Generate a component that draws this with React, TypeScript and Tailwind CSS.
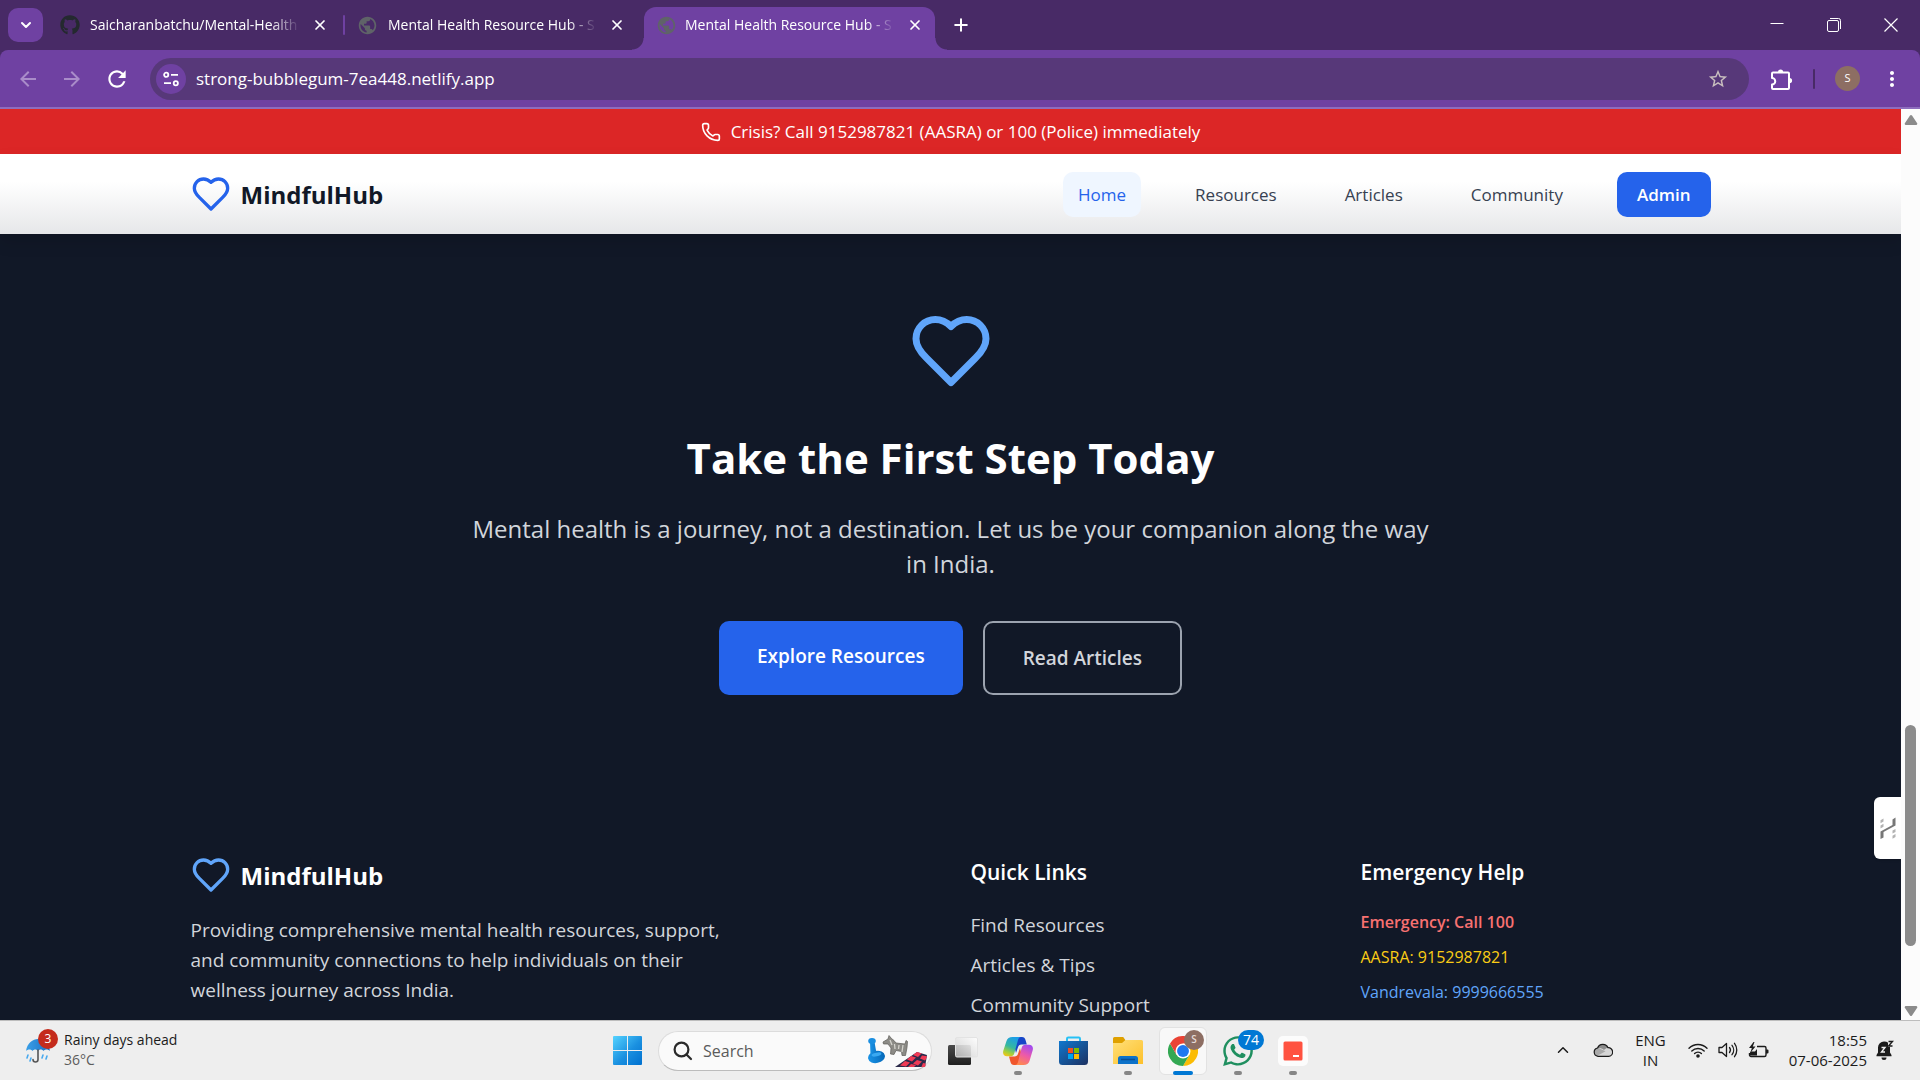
import type { ReactNode } from "react";
import { ChevronDown, ChevronUp, Phone, Plus, X } from "lucide-react";
import { FaGithub, FaWhatsapp } from "react-icons/fa6";
import { MdArrowBack, MdArrowForward, MdMoreVert, MdPublic, MdRefresh, MdStarBorder } from "react-icons/md";

function Heart({ className }: { className: string }) {
  return (
    <svg
      viewBox="0 0 24 24"
      fill="none"
      stroke="currentColor"
      strokeWidth="2"
      strokeLinecap="round"
      strokeLinejoin="round"
      className={className}
      aria-hidden="true"
    >
      <path d="M19 14c1.49-1.46 3-3.21 3-5.5A5.5 5.5 0 0 0 16.5 3c-1.76 0-3 .5-4.5 2-1.5-1.5-2.74-2-4.5-2A5.5 5.5 0 0 0 2 8.5c0 2.3 1.5 4.05 3 5.5l7 7Z" />
    </svg>
  );
}

/* ---------- Browser chrome ---------- */

function TabTitle({ children }: { children: ReactNode }) {
  return (
    <span className="min-w-0 flex-1 overflow-hidden text-sm whitespace-nowrap text-white [mask-image:linear-gradient(to_right,black_86%,transparent)]">
      {children}
    </span>
  );
}

function CloseTab() {
  return (
    <button type="button" aria-label="Close tab" className="ml-3 text-white">
      <X className="size-4" strokeWidth={2.6} />
    </button>
  );
}

function TabStrip() {
  return (
    <div className="flex h-[50px] items-center pr-px pl-2">
      <button
        type="button"
        aria-label="Search tabs"
        className="mr-2 flex h-[34px] w-[35px] items-center justify-center rounded-[10px] bg-[#6f41a2] text-white"
      >
        <ChevronDown className="size-4" strokeWidth={3} />
      </button>
      <div className="flex w-[292px] items-center pr-[15px] pl-[9px]">
        <FaGithub className="mr-2.5 size-5 text-[#24292f]" />
        <TabTitle>Saicharanbatchu/Mental-Health</TabTitle>
        <CloseTab />
      </div>
      <span className="h-5 w-0.5 rounded bg-[#6f41a2]" />
      <div className="flex w-[299px] items-center pr-[19px] pl-3">
        <MdPublic className="mr-2.5 size-[21px] text-[#5f6368]" />
        <TabTitle>Mental Health Resource Hub - S</TabTitle>
        <CloseTab />
      </div>
      <div className="relative flex h-[43px] w-[291px] items-center self-end rounded-t-xl bg-[#6f41a2] px-3 pb-[7px] before:absolute before:bottom-0 before:-left-3 before:size-3 before:bg-[radial-gradient(circle_at_0_0,transparent_11px,#6f41a2_12px)] after:absolute after:-right-3 after:bottom-0 after:size-3 after:bg-[radial-gradient(circle_at_100%_0,transparent_11px,#6f41a2_12px)]">
        <MdPublic className="mr-2 size-[21px] text-[#5f6368]" />
        <TabTitle>Mental Health Resource Hub - S</TabTitle>
        <CloseTab />
      </div>
      <button type="button" aria-label="New tab" className="ml-4 text-white">
        <Plus className="size-5" strokeWidth={2.4} />
      </button>
      <div className="ml-auto flex h-full">
        <button type="button" aria-label="Minimise" className="flex w-[57px] items-center justify-center">
          <svg viewBox="0 0 14 14" className="size-3.5" stroke="#fff" fill="none">
            <path d="M0.5 5.5h13" />
          </svg>
        </button>
        <button type="button" aria-label="Restore" className="flex w-[57px] items-center justify-center">
          <svg viewBox="0 0 14 14" className="size-3.5" stroke="#fff" fill="none">
            <rect x="0.5" y="2.5" width="11" height="11" rx="1.5" />
            <path d="M3 0.5h8.5a2 2 0 0 1 2 2V11" />
          </svg>
        </button>
        <button type="button" aria-label="Close" className="flex w-[57px] items-center justify-center">
          <svg viewBox="0 0 14 14" className="size-3.5" stroke="#fff" strokeWidth="1.2" fill="none">
            <path d="M0.5 0.5l13 13M13.5 0.5l-13 13" />
          </svg>
        </button>
      </div>
    </div>
  );
}

function Toolbar() {
  return (
    <div className="flex h-[59px] items-center gap-5 rounded-t-lg border-b-2 border-[#8e6dbd] bg-[#6f41a2] pr-4 pl-4 text-white">
      <button type="button" aria-label="Back" className="text-[#a98cc9]">
        <MdArrowBack className="size-6" />
      </button>
      <button type="button" aria-label="Forward" className="text-[#a98cc9]">
        <MdArrowForward className="size-6" />
      </button>
      <button type="button" aria-label="Reload">
        <MdRefresh className="size-[26px]" />
      </button>
      <div className="flex h-[42px] flex-1 items-center rounded-full bg-[#573879] pr-5 pl-1.5">
        <button
          type="button"
          aria-label="View site information"
          className="flex size-[30px] items-center justify-center rounded-full bg-[#6f41a2]"
        >
          <svg viewBox="0 0 16 16" className="size-4" fill="none" stroke="#fff" strokeWidth="1.8">
            <circle cx="3.2" cy="3.8" r="2.1" />
            <path d="M8 3.8h7M1 12.2h7" />
            <circle cx="12.8" cy="12.2" r="2.1" />
          </svg>
        </button>
        <input
          type="text"
          aria-label="Address and search bar"
          defaultValue="strong-bubblegum-7ea448.netlify.app"
          className="ml-2.5 min-w-0 flex-1 bg-transparent text-[17px] text-white outline-none"
        />
        <button type="button" aria-label="Bookmark this tab" className="text-[#c9bfbf]">
          <MdStarBorder className="size-[22px]" />
        </button>
      </div>
      <button type="button" aria-label="Extensions">
        <svg viewBox="0 0 24 24" className="size-6" fill="none" stroke="#fff" strokeWidth="2" strokeLinejoin="round">
          <path d="M4 5.500h15a1 1 0 0 1 1 1V21a1 1 0 0 1-1 1H4a1 1 0 0 1-1-1v-3.500a3.200 3.200 0 0 0 0-6.500V6.500a1 1 0 0 1 1-1z" />
          <path d="M9 5a2.600 2.600 0 0 1 5.200 0zM20.500 11a2.600 2.600 0 0 1 0 5.200z" fill="#fff" stroke="none" />
        </svg>
      </button>
      <span className="h-5 w-0.5 rounded bg-[#482a66]" />
      <button
        type="button"
        aria-label="Profile"
        className="flex size-[25px] items-center justify-center rounded-full bg-[#8d6e63] text-[11px] text-white"
      >
        S
      </button>
      <button type="button" aria-label="Menu">
        <MdMoreVert className="size-6" />
      </button>
    </div>
  );
}

/* ---------- Web page ---------- */

const navItems = ["Resources", "Articles", "Community"];

function Nav() {
  return (
    <header className="relative bg-linear-to-b from-white from-35% to-[#e6e7e9] shadow-[0_8px_16px_rgba(0,0,0,0.12)]">
      <div className="mx-auto flex h-20 max-w-[1600px] items-center justify-between px-10">
        <a href="#home" className="flex items-end gap-2.5">
          <Heart className="size-10 text-[#2563eb]" />
          <span className="text-2xl leading-[38px] font-bold text-[#111827]">MindfulHub</span>
        </a>
        <nav className="flex items-center gap-10 text-[17px] leading-[25px] font-medium text-[#374151]">
          <a href="#home" className="rounded-[10px] bg-[#eff6ff] px-[15px] py-2.5 text-[#2563eb]">
            Home
          </a>
          {navItems.map((item) => (
            <a key={item} href={`#${item.toLowerCase()}`} className="px-3.5 py-2.5">
              {item}
            </a>
          ))}
          <a href="#admin" className="rounded-[10px] bg-[#2563eb] px-5 py-2.5 font-semibold text-white">
            Admin
          </a>
        </nav>
      </div>
    </header>
  );
}

function Hero() {
  return (
    <section className="flex flex-col items-center px-10 pt-[75px] pb-[100px] text-center">
      <Heart className="size-[84px] text-[#60a5fa]" />
      <h1 className="mt-10 text-[42px] leading-[50px] font-bold text-white">Take the First Step Today</h1>
      <p className="mt-7 max-w-[960px] text-2xl leading-[35px] text-[#d1d5db]">
        Mental health is a journey, not a destination. Let us be your companion along the way in India.
      </p>
      <div className="mt-10 flex gap-5 text-[19px] leading-[30px] font-semibold">
        <a href="#resources" className="rounded-[10px] bg-[#2563eb] px-[38px] py-5 text-white">
          Explore Resources
        </a>
        <a href="#articles" className="rounded-[10px] border-2 border-[#9ca3af] px-[38px] py-5 text-[#d1d5db]">
          Read Articles
        </a>
      </div>
    </section>
  );
}

function Footer() {
  return (
    <footer className="mx-auto grid max-w-[1600px] grid-cols-4 gap-10 px-10 pt-[60px]">
      <div className="col-span-2">
        <div className="flex items-end gap-2.5">
          <Heart className="size-10 text-[#60a5fa]" />
          <span className="text-2xl leading-[38px] font-bold text-white">MindfulHub</span>
        </div>
        <p className="mt-5 max-w-[560px] text-[19px] leading-[30px] text-[#d1d5db]">
          Providing comprehensive mental health resources, support, and community connections to help individuals on
          their wellness journey across India.
        </p>
      </div>
      <div>
        <h2 className="text-[21px] leading-[35px] font-semibold text-white">Quick Links</h2>
        <ul className="mt-5 space-y-2.5 text-[19px] leading-[30px] text-[#d1d5db]">
          <li>
            <a href="#resources">Find Resources</a>
          </li>
          <li>
            <a href="#articles">Articles &amp; Tips</a>
          </li>
          <li>
            <a href="#community">Community Support</a>
          </li>
        </ul>
      </div>
      <div>
        <h2 className="text-[21px] leading-[35px] font-semibold text-white">Emergency Help</h2>
        <ul className="mt-5 space-y-2.5 text-base leading-[25px]">
          <li className="font-semibold text-[#f87171]">Emergency: Call 100</li>
          <li className="text-[#facc15]">AASRA: 9152987821</li>
          <li className="text-[#60a5fa]">Vandrevala: 9999666555</li>
        </ul>
      </div>
    </footer>
  );
}

function ExtensionHandle() {
  return (
    <button
      type="button"
      aria-label="Open extension panel"
      className="absolute right-0 bottom-[161px] flex h-[62px] w-[27px] items-center justify-center rounded-l-md bg-white shadow"
    >
      <svg viewBox="0 0 16 22" className="h-[22px] w-4">
        <path d="M0.5 22v-7.500L12.500 8V2.500L15.500 0.500v8L3.500 15v5.500z" fill="#777" />
        <path
          d="M0.500 3.200l3-1.700v3l-3 1.700zM0.500 8.400l3-1.700v3l-3 1.700zM12.500 13.600l3-1.700v3l-3 1.700zM12.500 18.800l3-1.700v3l-3 1.700z"
          fill="#b3b3b3"
        />
      </svg>
    </button>
  );
}

function Scrollbar() {
  return (
    <div className="flex w-[19px] shrink-0 flex-col items-center bg-[#fcfcfc] pt-1.5 pb-1">
      <svg viewBox="0 0 14 10" className="h-2.5 w-3.5" fill="#8b8b8b">
        <path d="M6 0.600a1.300 1.300 0 0 1 2 0l5 7.400a1.200 1.200 0 0 1-1 2H2a1.200 1.200 0 0 1-1-2z" />
      </svg>
      <div className="grow-[600]" />
      <div className="w-[11px] grow-[221] rounded-full bg-[#8b8b8b]" />
      <div className="grow-[60]" />
      <svg viewBox="0 0 14 10" className="h-2.5 w-3.5 rotate-180" fill="#8b8b8b">
        <path d="M6 0.600a1.300 1.300 0 0 1 2 0l5 7.400a1.200 1.200 0 0 1-1 2H2a1.200 1.200 0 0 1-1-2z" />
      </svg>
    </div>
  );
}

/* ---------- Taskbar ---------- */

function UmbrellaIcon() {
  return (
    <svg viewBox="0 0 28 30" className="h-[30px] w-7">
      <defs>
        <linearGradient id="umb" x1="0" y1="0" x2="1" y2="0">
          <stop offset="0" stopColor="#3aa0e8" />
          <stop offset="1" stopColor="#1b6ec2" />
        </linearGradient>
      </defs>
      <path d="M2 16C3 8 9 4 14 4s11 4 12 12c-2-2-5-2-6.500 0-1.500-2-4-2-5.500 0-1.500-2-4-2-5.500 0C7 14 4 14 2 16z" fill="url(#umb)" />
      <path d="M14 15v9.500a2.500 2.500 0 0 1-5 0" stroke="#555" strokeWidth="1.6" fill="none" strokeLinecap="round" />
      <path d="M4 20l-1 3M7 23l-1 3M19 20l-1 3M23 21l-1 3" stroke="#49a9ee" strokeWidth="1.6" strokeLinecap="round" />
    </svg>
  );
}

function WindowsIcon() {
  return (
    <svg viewBox="0 0 29 29" className="size-[29px]">
      <defs>
        <linearGradient id="win" x1="0" y1="0" x2="1" y2="1">
          <stop offset="0" stopColor="#55d3ff" />
          <stop offset="0.55" stopColor="#1a90e0" />
          <stop offset="1" stopColor="#0070cf" />
        </linearGradient>
      </defs>
      <path d="M1 0h13v14H0V1a1 1 0 0 1 1-1zM15 0h13a1 1 0 0 1 1 1v13H15zM0 15h14v14H1a1 1 0 0 1-1-1zM15 15h14v13a1 1 0 0 1-1 1H15z" fill="url(#win)" />
    </svg>
  );
}

function GamesIcon() {
  return (
    <svg viewBox="0 0 60 34" className="h-[34px] w-[60px]">
      <defs>
        <linearGradient id="pawn" x1="0" y1="0" x2="1" y2="0">
          <stop offset="0" stopColor="#1a93e6" />
          <stop offset="1" stopColor="#0568b8" />
        </linearGradient>
        <clipPath id="board">
          <path d="M27 33L49 18l10 3-2 12z" />
        </clipPath>
      </defs>
      <ellipse cx="8.500" cy="23" rx="8.500" ry="6" transform="rotate(-12 8.5 23)" fill="url(#pawn)" />
      <path d="M2 8h4.500l1.500 8.500 4.500 3.500-10 1.500z" fill="url(#pawn)" />
      <ellipse cx="4" cy="7" rx="3.800" ry="3" fill="#1a8ee0" />
      <ellipse cx="8.500" cy="20.500" rx="5" ry="1.800" transform="rotate(-12 8.5 20.5)" fill="#3aa9f2" />
      <path d="M15 8l5-3 1-3.500 2.500 3L26 6.500l2 2.500 9 1 1-3.500 1.500 1-.5 6-1.500 8h-3.500l-.5-4-5.500-1-2 4-3.500-.5.500-6-3-4-4.500 0z" fill="#8c8b86" stroke="#5d5c58" strokeWidth=".7" />
      <path d="M22 6l2 5M26.500 10l.5 5M31 11l-.5 4M35 11l-1 7" stroke="#d4d3cd" strokeWidth="1.300" />
      <g clipPath="url(#board)">
        <path d="M24 16h38v20H24z" fill="#2c2a4a" />
        <path d="M49 17l5 2-4 4-5-2zM43 22l5 1.500-4 4-5-2zM54 21.500l6 1-3 4-5-2zM49 26l5 1.500-4 4-5-2zM37 27l5 1.500-4 4-6-1zM43 30l5 1-4 4-5-1zM55 29l6 1-3 5-5-1z" fill="#f03a55" />
      </g>
    </svg>
  );
}

function TaskViewIcon() {
  return (
    <svg viewBox="0 0 30 30" className="size-[30px]">
      <defs>
        <linearGradient id="tvd" x1="0" y1="0" x2="0" y2="1">
          <stop offset="0" stopColor="#4b4b4b" />
          <stop offset="1" stopColor="#1f1f1f" />
        </linearGradient>
        <linearGradient id="tvl" x1="1" y1="0" x2="0" y2="1">
          <stop offset="0" stopColor="#ffffff" stopOpacity=".95" />
          <stop offset="1" stopColor="#cfcfcf" stopOpacity=".8" />
        </linearGradient>
      </defs>
      <rect x="0" y="9" width="23" height="20" rx="1.500" fill="url(#tvd)" />
      <rect x="7.500" y="1.500" width="22" height="19.500" rx="1.500" fill="url(#tvl)" stroke="#e3e3e3" />
    </svg>
  );
}

function CopilotIcon() {
  return (
    <svg viewBox="0 0 30 28" className="h-7 w-[30px]">
      <defs>
        <linearGradient id="cpa" x1="0.6" y1="0" x2="0.2" y2="1">
          <stop offset="0" stopColor="#1b9de8" />
          <stop offset="0.5" stopColor="#35b8a0" />
          <stop offset="0.8" stopColor="#a6cf3a" />
          <stop offset="1" stopColor="#f4c515" />
        </linearGradient>
        <linearGradient id="cpb" x1="0.7" y1="0" x2="0.3" y2="1">
          <stop offset="0" stopColor="#a24bef" />
          <stop offset="0.5" stopColor="#ee5aa8" />
          <stop offset="1" stopColor="#ff8a4c" />
        </linearGradient>
      </defs>
      <path d="M9 0h10c2 0 3 1 3.500 3l1.300 4.500h-5.300c-2 0-3 1-3.600 3L13 16z" fill="#1746c8" />
      <path d="M21 28H11c-2 0-3-1-3.500-3L6 19.500h5.500c2 0 3-1 3.600-3L17 11z" fill="#f0562c" />
      <path d="M9.500 0H18c-1.500 0-2.400 1.200-3 3l-3.600 13c-.7 2.300-1.600 3.300-3.900 3.300H4c-3 0-4.600-2.300-3.700-5.600L3.500 4C4.400 1.200 6.200 0 9.500 0z" fill="url(#cpa)" />
      <path d="M20.500 28H12c1.500 0 2.400-1.200 3-3l3.600-14c.7-2.300 1.600-3.300 3.900-3.300H26c3 0 4.600 2.300 3.700 5.600L26.500 24c-.9 2.800-2.700 4-6 4z" fill="url(#cpb)" />
    </svg>
  );
}

function StoreIcon() {
  return (
    <svg viewBox="0 0 29 30" className="h-[30px] w-[29px]">
      <defs>
        <linearGradient id="store" x1="0" y1="0" x2="1" y2="1">
          <stop offset="0" stopColor="#0f78cf" />
          <stop offset="1" stopColor="#1d3161" />
        </linearGradient>
      </defs>
      <path d="M8 7V2.800A1.300 1.300 0 0 1 9.300 1.500h10.400A1.300 1.300 0 0 1 21 2.800V7" fill="none" stroke="#28c1f5" strokeWidth="2" />
      <path d="M0 5h29v20.500A3.500 3.500 0 0 1 25.500 29h-22A3.500 3.500 0 0 1 0 25.500z" fill="url(#store)" />
      <path d="M9 12h5v5H9z" fill="#f25022" />
      <path d="M15 12h5v5h-5z" fill="#7fba00" />
      <path d="M9 18h5v5H9z" fill="#00a4ef" />
      <path d="M15 18h5v5h-5z" fill="#ffb900" />
    </svg>
  );
}

function ExplorerIcon() {
  return (
    <svg viewBox="0 0 30 27" className="h-[27px] w-[30px]">
      <defs>
        <linearGradient id="fold" x1="0" y1="0" x2="1" y2="1">
          <stop offset="0" stopColor="#ffe07a" />
          <stop offset="1" stopColor="#fdc02a" />
        </linearGradient>
      </defs>
      <path d="M1.500 0h8.700l2.500 3.500L9 8H0V1.500A1.500 1.500 0 0 1 1.500 0z" fill="#dfa000" />
      <path d="M0 6h9l3.500-3H28.500A1.500 1.500 0 0 1 30 4.500V27H0z" fill="url(#fold)" />
      <path d="M5 27v-5.500a2.500 2.500 0 0 1 2.500-2.500h15a2.500 2.500 0 0 1 2.500 2.500V27z" fill="#0d72c9" />
      <path d="M8 22.500h14" stroke="#0a4f94" strokeWidth="1.500" />
    </svg>
  );
}

function ChromeIcon() {
  return (
    <svg viewBox="0 0 48 48" className="size-[30px]">
      <path d="M24 12h20.800A24 24 0 0 1 24 48l10.400-18z" fill="#fbbc04" />
      <path d="M13.600 30L3.200 12A24 24 0 0 0 24 48l10.400-18z" fill="#34a853" />
      <path d="M3.200 12A24 24 0 0 1 44.800 12H24L13.600 30z" fill="#ea4335" />
      <circle cx="24" cy="24" r="12" fill="#fff" />
      <circle cx="24" cy="24" r="9.500" fill="#1f78f0" />
    </svg>
  );
}

function RecorderIcon() {
  return (
    <svg viewBox="0 0 30 30" className="size-[30px]">
      <rect width="30" height="30" rx="5" fill="#fcfcfc" />
      <rect x="5.500" y="5.500" width="19" height="19" rx="1.500" fill="#ff5240" />
      <rect x="15" y="19" width="6" height="2" fill="#fff" />
    </svg>
  );
}

type Running = "none" | "open" | "active";

function Tile({ label, running = "none", children }: { label: string; running?: Running; children: ReactNode }) {
  return (
    <button
      type="button"
      aria-label={label}
      className={
        running === "active"
          ? "relative flex size-12 items-center justify-center rounded-md border border-[#e2e2e2] bg-[#f8f8f8]"
          : "relative flex size-12 items-center justify-center rounded-md"
      }
    >
      {children}
      {running === "open" && <span className="absolute bottom-0 h-1 w-2 rounded-full bg-[#868686]" />}
      {running === "active" && <span className="absolute -bottom-px h-1 w-5 rounded-full bg-[#0078d4]" />}
    </button>
  );
}

function SystemTray() {
  return (
    <div className="flex items-center justify-end pr-[26px] pb-0.5 text-[#1b1b1b]">
      <button type="button" aria-label="Show hidden icons">
        <ChevronUp className="size-[18px]" />
      </button>
      <svg viewBox="0 0 20 14" className="ml-[21px] h-3.5 w-5">
        <path d="M5 13.300a4.200 4.200 0 0 1-.4-8.300A5.600 5.600 0 0 1 15 4.700a4.300 4.300 0 0 1 .6 8.600z" fill="#d6d6d6" />
        <path d="M4.600 5A5.600 5.600 0 0 1 15 4.700c-2 .3-3 1.300-4 2.300-2-2-4.400-2.300-6.400-2z" fill="#8c8c8c" />
        <path d="M1.200 10.500A4 4 0 0 1 7.500 6l5 2.300L4 13z" fill="#a9a9a9" />
        <path d="M5 13.300a4.200 4.200 0 0 1-.4-8.300A5.600 5.600 0 0 1 15 4.700a4.300 4.300 0 0 1 .6 8.600z" fill="none" stroke="#1b1b1b" strokeWidth="1.200" />
      </svg>
      <div className="ml-[22px] text-center text-[15px] leading-5">
        ENG
        <br />
        IN
      </div>
      <svg viewBox="0 0 20 16" className="ml-[22px] h-4 w-5" fill="none" stroke="#1b1b1b" strokeWidth="1.400" strokeLinecap="round">
        <path d="M1 6.200a12.700 12.700 0 0 1 18 0M3.800 9a8.800 8.800 0 0 1 12.400 0M6.600 11.600a4.900 4.900 0 0 1 6.800 0" />
        <circle cx="10" cy="14" r="1.100" fill="#1b1b1b" />
      </svg>
      <svg viewBox="0 0 20 18" className="ml-2.5 h-[18px] w-5" fill="none" stroke="#1b1b1b" strokeWidth="1.300" strokeLinecap="round" strokeLinejoin="round">
        <path d="M1 6.500h3L8.500 2.500v13L4 11.500H1z" />
        <path d="M11.500 6.500a4 4 0 0 1 0 5M14 4.300a7.500 7.500 0 0 1 0 9.400M16.500 2.300a11 11 0 0 1 0 13.400" />
      </svg>
      <svg viewBox="0 0 21 16" className="ml-2.5 h-4 w-[21px]">
        <path d="M9 4.500h7.500a1.500 1.500 0 0 1 1.500 1.500v7a1.500 1.500 0 0 1-1.500 1.500H3A1.500 1.500 0 0 1 1.500 13v-2" fill="none" stroke="#1b1b1b" strokeWidth="1.400" />
        <path d="M18 7.500h1.500q1 0 1 1v2q0 1-1 1H18zM2 9.500h5l2-2.500V13.500H2zM5.500 0L1 6h2.800L2.500 10.500 7.500 4.500H4.800L6.500 0z" fill="#1b1b1b" />
      </svg>
      <div className="ml-5 text-right text-[15px] leading-5">
        18:55
        <br />
        07-06-2025
      </div>
      <svg viewBox="0 0 18 20" className="ml-[9px] h-5 w-[18px]">
        <path d="M8 1.500a6 6 0 0 0-6 6v5L.5 15v1.200h15V15L14 12.500v-6A6 6 0 0 0 8 1.500zM5.500 17.500h5a2.500 2.500 0 0 1-5 0z" fill="#1b1b1b" />
        <path d="M5.500 7.500H9L5.500 12H9" fill="none" stroke="#eee" strokeWidth="1.400" />
        <path d="M12 0h6v7h-6z" fill="#eeeeee" />
        <path d="M12.500 1.500H16.500L12.500 6H16.500" fill="none" stroke="#1b1b1b" strokeWidth="1.400" />
      </svg>
    </div>
  );
}

function Taskbar() {
  return (
    <div className="grid h-[60px] shrink-0 grid-cols-[1fr_auto_1fr] items-center border-t border-[#bdbdbd] bg-[#eeeeee]">
      <button type="button" className="flex items-center gap-3 justify-self-start pb-0.5 pl-6 text-left">
        <span className="relative">
          <UmbrellaIcon />
          <span className="absolute -top-1.5 left-3.5 flex size-5 items-center justify-center rounded-full bg-[#c42b1c] text-xs text-white">
            3
          </span>
        </span>
        <span className="text-sm leading-5 text-[#1b1b1b]">
          Rainy days ahead
          <br />
          <span className="text-[#5c5c5c]">36°C</span>
        </span>
      </button>
      <div className="flex items-center gap-[7px]">
        <Tile label="Start">
          <WindowsIcon />
        </Tile>
        <label className="flex h-10 w-[274px] items-center rounded-full border border-b-[#bcbcbc] border-[#dcdcdc] bg-[#fafafa] pr-[3px] pl-3.5">
          <svg viewBox="0 0 20 20" className="size-5" fill="none" stroke="#2a2a2a" strokeWidth="2.200" strokeLinecap="round">
            <circle cx="8.500" cy="8.500" r="6.900" />
            <path d="M13.500 13.500l4.500 4.500" />
          </svg>
          <input
            type="text"
            aria-label="Search"
            placeholder="Search"
            className="ml-2.5 w-0 min-w-0 flex-1 bg-transparent text-base outline-none placeholder:text-[#5a5a5a]"
          />
          <GamesIcon />
        </label>
        <Tile label="Task view">
          <TaskViewIcon />
        </Tile>
        <Tile label="Copilot" running="open">
          <CopilotIcon />
        </Tile>
        <Tile label="Microsoft Store">
          <StoreIcon />
        </Tile>
        <Tile label="File Explorer" running="open">
          <ExplorerIcon />
        </Tile>
        <Tile label="Google Chrome" running="active">
          <ChromeIcon />
          <span className="absolute top-0.5 right-0.5 flex size-5 items-center justify-center rounded-full bg-[#8d6e63] text-[10px] font-semibold text-[#e6dcd8]">
            S
          </span>
        </Tile>
        <Tile label="WhatsApp" running="open">
          <FaWhatsapp className="size-[34px] text-[#1f8f5f]" />
          <span className="absolute top-[3px] -right-0.5 flex h-5 w-[26px] items-center justify-center rounded-full bg-[#0078d4] text-sm text-white">
            74
          </span>
        </Tile>
        <Tile label="Screen recorder" running="open">
          <RecorderIcon />
        </Tile>
      </div>
      <SystemTray />
    </div>
  );
}

export default function App() {
  return (
    <div className="flex h-screen flex-col overflow-hidden bg-[#482a66] font-['Open_Sans','Noto_Sans',sans-serif]">
      <TabStrip />
      <Toolbar />
      <div className="flex min-h-0 flex-1">
        <main className="relative min-w-0 flex-1 overflow-hidden bg-[#111827]">
          <div className="flex items-center justify-center gap-2.5 bg-[#dc2626] py-2.5 text-[17px] leading-[25px] text-white">
            <Phone className="size-5" />
            Crisis? Call 9152987821 (AASRA) or 100 (Police) immediately
          </div>
          <Nav />
          <Hero />
          <Footer />
          <ExtensionHandle />
        </main>
        <Scrollbar />
      </div>
      <Taskbar />
    </div>
  );
}
